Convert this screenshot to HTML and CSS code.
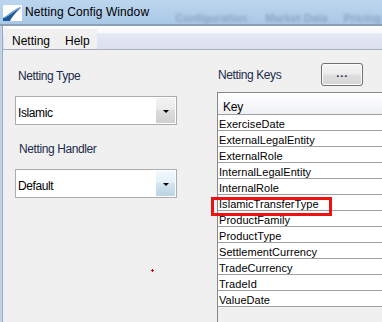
FILE: index.html
```html
<!DOCTYPE html>
<html lang="en">
<head>
    <meta charset="UTF-8">
    <title>Netting Config Window</title>
    <link rel="stylesheet" href="styles.css">
</head>
<body>
    <div class="titlebar">
        <svg class="app-icon" width="19" height="16" viewBox="0 0 19 16">
            <rect x="0" y="0" width="19" height="16" fill="#fdfdfe"/>
            <path d="M0 16 L0 13 C5 12 9 7 18 3 C12 8 9 12 7 16 Z" fill="#1d5a9c"/>
            <path d="M0 13 C4 11 8 6 17 2 L18 3 C9 7 5 12 0 13 Z" fill="#6b9bd0"/>
        </svg>
        <span class="title">Netting Config Window</span>
        <div class="behind">
            <span class="ghost g2">Configuration</span>
            <span class="ghost g3">Market Data</span>
            <span class="ghost g4">Pricing</span>
        </div>
    </div>

    <div class="window">
        <div class="frame"></div>
        <div class="client">
            <div class="menubar">
                <div class="menu-items">
                    <span class="menu-item">Netting</span>
                    <span class="menu-item">Help</span>
                </div>
            </div>

            <div class="content">
                <div class="left-col">
                    <label class="field-label">Netting Type</label>
                    <div class="combo">
                        <span class="combo-text">Islamic</span>
                        <span class="combo-btn"><i class="arrow"></i></span>
                    </div>
                    <label class="field-label second">Netting Handler</label>
                    <div class="combo">
                        <span class="combo-text">Default</span>
                        <span class="combo-btn hot"><i class="arrow"></i></span>
                    </div>
                </div>

                <div class="right-col">
                    <div class="keys-head">
                        <label class="field-label keys-label">Netting Keys</label>
                        <button class="dots-btn">...</button>
                    </div>
                    <div class="grid">
                        <div class="grid-header">Key</div>
                        <div class="row">ExerciseDate</div>
                        <div class="row">ExternalLegalEntity</div>
                        <div class="row">ExternalRole</div>
                        <div class="row">InternalLegalEntity</div>
                        <div class="row">InternalRole</div>
                        <div class="row">IslamicTransferType</div>
                        <div class="row">ProductFamily</div>
                        <div class="row">ProductType</div>
                        <div class="row">SettlementCurrency</div>
                        <div class="row">TradeCurrency</div>
                        <div class="row">TradeId</div>
                        <div class="row">ValueDate</div>
                        <div class="highlight"></div>
                    </div>
                </div>
                <div class="cursor-mark"></div>
            </div>
        </div>
    </div>
</body>
</html>
```

FILE: styles.css
```css
body {
    margin: 0;
    padding: 0;
    width: 382px;
    height: 322px;
    overflow: hidden;
    font-family: "Liberation Sans", Arial, sans-serif;
    background: #f0f0f0;
}
.titlebar {
    height: 24px;
    display: flex;
    align-items: flex-start;
    background: linear-gradient(to bottom, #bcd6ee, #a9c8e6);
    overflow: hidden;
    border-bottom: 2px solid #8aa0b8;
}
.app-icon {
    margin: 5px 0 0 3px;
    flex: none;
}
.title {
    margin: 5px 0 0 3px;
    font-size: 12px;
    line-height: 14px;
    color: #000;
    letter-spacing: 0.1px;
    white-space: nowrap;
}
.behind {
    display: flex;
    flex: 1;
    padding-top: 12px;
    filter: blur(1.4px);
}
.ghost {
    font-size: 11px;
    font-weight: bold;
    color: rgba(80, 100, 130, 0.38);
    white-space: nowrap;
}
.g2 { margin-left: 26px; }
.g3 { margin-left: 18px; }
.g4 { margin-left: 16px; }

.window {
    display: flex;
    height: 296px;
}
.frame {
    width: 3px;
    flex: none;
    background: linear-gradient(to right, #a8c0da, #d7e7f6 40%, #7d8ea6);
}
.client {
    flex: 1;
    display: flex;
    flex-direction: column;
    min-width: 0;
}
.menubar {
    height: 24px;
    box-sizing: border-box;
    border-top: 1px solid #ffffff;
    border-bottom: 1px solid #a9aeb9;
    background: linear-gradient(to bottom, #fcfcfe 0%, #f8f9fc 25%, #e4e7f4 32%, #dcdfef 100%);
    padding: 2px 0 0 1px;
}
.menu-items {
    display: inline-flex;
    height: 20px;
    background: #f0f0f0;
    padding: 0 7px 0 8px;
}
.menu-item {
    font-size: 12px;
    line-height: 14px;
    padding-top: 5px;
    margin-right: 15px;
    color: #000;
}
.menu-item:last-child {
    margin-right: 0;
}

.content {
    flex: 1;
    display: flex;
    position: relative;
    min-height: 0;
}
.left-col {
    width: 162px;
    flex: none;
    margin-left: 12px;
    padding-top: 19px;
    display: flex;
    flex-direction: column;
}
.field-label {
    display: block;
    font-size: 12px;
    line-height: 14px;
    color: #1b2b4b;
    letter-spacing: -0.4px;
    padding-left: 3px;
    white-space: nowrap;
}
.field-label.second {
    margin-top: 17px;
    padding-left: 4px;
}
.combo {
    margin-top: 13px;
    height: 29px;
    box-sizing: border-box;
    border: 1px solid #adadad;
    background: #fff;
    padding: 1px;
    display: flex;
}
.combo-text {
    flex: 1;
    font-size: 12px;
    line-height: 14px;
    padding: 8px 0 0 1px;
    letter-spacing: -0.4px;
    color: #000;
}
.combo-btn {
    width: 19px;
    display: flex;
    align-items: center;
    justify-content: center;
    padding: 2px 0 0 1px;
    box-sizing: border-box;
    background: linear-gradient(to bottom, #f2f2f2 0%, #ebebeb 45%, #dddddd 50%, #cfcfcf 100%);
}
.combo-btn.hot {
    background: linear-gradient(to bottom, #f1f8fd 0%, #e4f1fa 45%, #d2e5f2 50%, #bcd3e4 100%);
}
.arrow {
    width: 0;
    height: 0;
    border-left: 3px solid transparent;
    border-right: 3px solid transparent;
    border-top: 3px solid #000;
}

.right-col {
    margin-left: 40px;
    flex: 1;
    padding-top: 13px;
    display: flex;
    flex-direction: column;
    min-width: 0;
}
.keys-head {
    display: flex;
    align-items: flex-start;
    height: 23px;
}
.keys-label {
    margin-top: 5px;
    padding-left: 1px;
}
.dots-btn {
    margin-left: 40px;
    width: 42px;
    height: 23px;
    border: 1px solid #707070;
    border-radius: 3px;
    background: linear-gradient(to bottom, #f4f4f4 0%, #ececec 48%, #dfdfdf 52%, #d4d4d4 100%);
    font-family: "Liberation Sans", Arial, sans-serif;
    font-size: 11px;
    font-weight: bold;
    color: #1c1c66;
    padding: 0 0 4px 0;
    letter-spacing: 1px;
    box-shadow: inset 0 0 0 1px #fcfcfc;
}
.grid {
    margin-top: 6px;
    flex: 1;
    border-top: 1px solid #828790;
    border-left: 1px solid #828790;
    position: relative;
}
.grid-header {
    height: 22px;
    box-sizing: border-box;
    padding: 7px 0 0 5px;
    font-size: 12px;
    line-height: 14px;
    letter-spacing: -0.2px;
    background: linear-gradient(to bottom, #ffffff 0%, #f7f8fa 50%, #eef0f3 100%);
    border-bottom: 1px solid #a0a0a0;
}
.row {
    height: 16px;
    box-sizing: border-box;
    padding: 4px 0 0 1px;
    font-size: 11px;
    line-height: 11px;
    letter-spacing: 0.05px;
    background: #fff;
    border-bottom: 1px solid #a0a0a0;
    color: #000;
    white-space: nowrap;
}
.highlight {
    position: absolute;
    left: -7px;
    top: 104px;
    width: 121px;
    height: 19px;
    box-sizing: border-box;
    border: 3px solid #ee1111;
}
.cursor-mark {
    position: absolute;
    left: 148px;
    top: 219px;
    width: 3px;
    height: 3px;
    background:
        linear-gradient(#e00000, #e00000) center / 3px 1px no-repeat,
        linear-gradient(#e00000, #e00000) center / 1px 3px no-repeat;
}
```
